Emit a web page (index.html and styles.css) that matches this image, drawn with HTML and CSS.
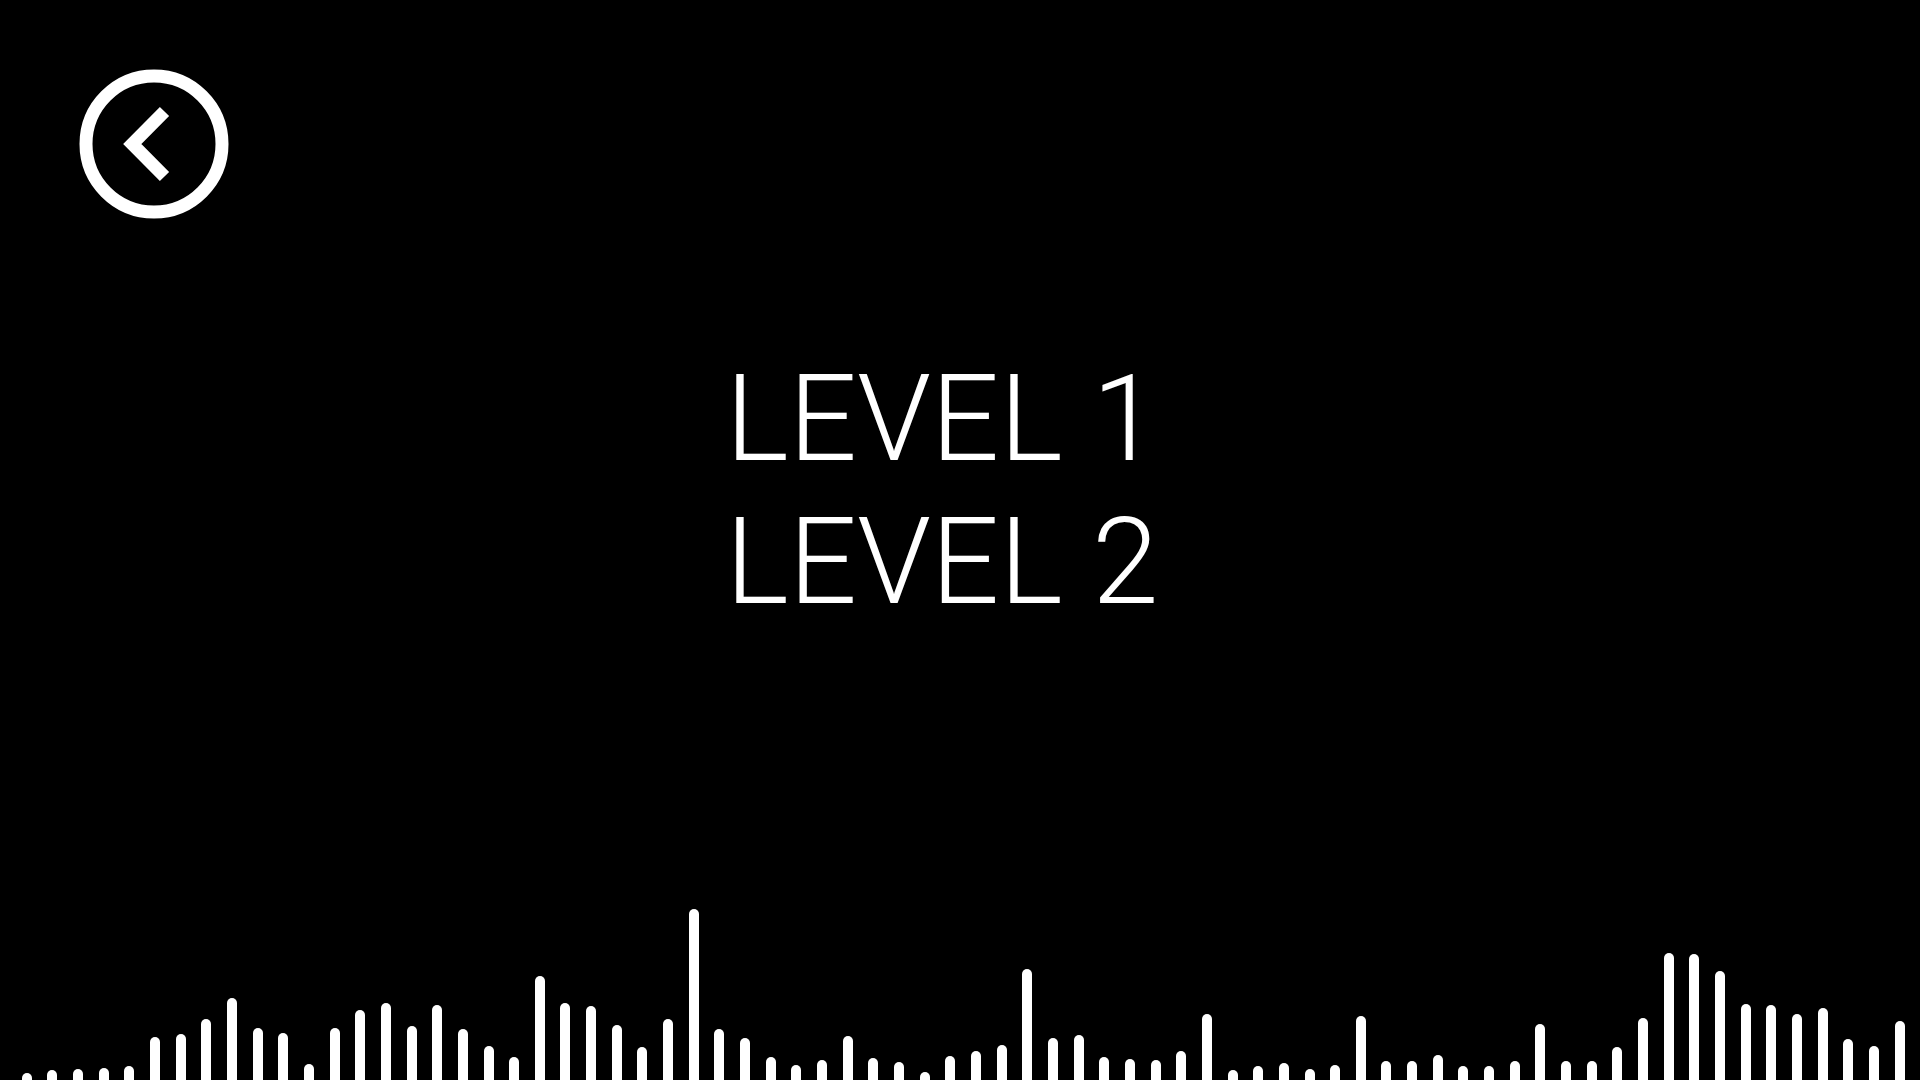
FILE: index.html
```html
<!DOCTYPE html>
<html lang="en">
<head>
<meta charset="utf-8">
<title>Levels</title>
<link rel="stylesheet" href="styles.css">
</head>
<body>
<div class="screen">
  <header class="top">
    <button class="back" aria-label="Back">
      <svg class="back-icon" viewBox="0 0 160 160" width="160" height="160">
        <circle cx="80" cy="80" r="68" fill="none" stroke="#fff" stroke-width="13"/>
        <polyline points="90.5,47.5 58.3,80 90.5,112.5" fill="none" stroke="#fff" stroke-width="13" stroke-linejoin="miter" stroke-linecap="butt"/>
      </svg>
    </button>
  </header>
  <main class="levels">
    <div class="level">LEVEL 1</div>
    <div class="level">LEVEL 2</div>
  </main>
  <footer class="bars">
    <span class="bar" style="height:7px"></span>
    <span class="bar" style="height:10px"></span>
    <span class="bar" style="height:11px"></span>
    <span class="bar" style="height:12px"></span>
    <span class="bar" style="height:14px"></span>
    <span class="bar" style="height:43px"></span>
    <span class="bar" style="height:46px"></span>
    <span class="bar" style="height:61px"></span>
    <span class="bar" style="height:82px"></span>
    <span class="bar" style="height:52px"></span>
    <span class="bar" style="height:47px"></span>
    <span class="bar" style="height:16px"></span>
    <span class="bar" style="height:52px"></span>
    <span class="bar" style="height:70px"></span>
    <span class="bar" style="height:77px"></span>
    <span class="bar" style="height:54px"></span>
    <span class="bar" style="height:75px"></span>
    <span class="bar" style="height:51px"></span>
    <span class="bar" style="height:34px"></span>
    <span class="bar" style="height:23px"></span>
    <span class="bar" style="height:104px"></span>
    <span class="bar" style="height:77px"></span>
    <span class="bar" style="height:74px"></span>
    <span class="bar" style="height:55px"></span>
    <span class="bar" style="height:33px"></span>
    <span class="bar" style="height:61px"></span>
    <span class="bar" style="height:171px"></span>
    <span class="bar" style="height:51px"></span>
    <span class="bar" style="height:42px"></span>
    <span class="bar" style="height:23px"></span>
    <span class="bar" style="height:15px"></span>
    <span class="bar" style="height:20px"></span>
    <span class="bar" style="height:44px"></span>
    <span class="bar" style="height:22px"></span>
    <span class="bar" style="height:18px"></span>
    <span class="bar" style="height:8px"></span>
    <span class="bar" style="height:24px"></span>
    <span class="bar" style="height:29px"></span>
    <span class="bar" style="height:35px"></span>
    <span class="bar" style="height:111px"></span>
    <span class="bar" style="height:42px"></span>
    <span class="bar" style="height:45px"></span>
    <span class="bar" style="height:23px"></span>
    <span class="bar" style="height:21px"></span>
    <span class="bar" style="height:20px"></span>
    <span class="bar" style="height:29px"></span>
    <span class="bar" style="height:66px"></span>
    <span class="bar" style="height:10px"></span>
    <span class="bar" style="height:14px"></span>
    <span class="bar" style="height:17px"></span>
    <span class="bar" style="height:11px"></span>
    <span class="bar" style="height:15px"></span>
    <span class="bar" style="height:64px"></span>
    <span class="bar" style="height:19px"></span>
    <span class="bar" style="height:19px"></span>
    <span class="bar" style="height:25px"></span>
    <span class="bar" style="height:14px"></span>
    <span class="bar" style="height:14px"></span>
    <span class="bar" style="height:19px"></span>
    <span class="bar" style="height:56px"></span>
    <span class="bar" style="height:19px"></span>
    <span class="bar" style="height:19px"></span>
    <span class="bar" style="height:33px"></span>
    <span class="bar" style="height:62px"></span>
    <span class="bar" style="height:127px"></span>
    <span class="bar" style="height:126px"></span>
    <span class="bar" style="height:109px"></span>
    <span class="bar" style="height:76px"></span>
    <span class="bar" style="height:75px"></span>
    <span class="bar" style="height:66px"></span>
    <span class="bar" style="height:72px"></span>
    <span class="bar" style="height:41px"></span>
    <span class="bar" style="height:34px"></span>
    <span class="bar" style="height:59px"></span>
    <span class="bar" style="height:75px"></span>
  </footer>
</div>
</body>
</html>
```

FILE: styles.css
```css
html, body {
  margin: 0;
  padding: 0;
  background: #000;
}

body {
  font-family: Roboto, "Liberation Sans", sans-serif;
  color: #fff;
  overflow: hidden;
}

.screen {
  width: 1920px;
  height: 1080px;
  display: flex;
  flex-direction: column;
  overflow: hidden;
}

.top {
  padding: 64px 0 0 74px;
  height: 160px;
  display: flex;
}

.back {
  background: none;
  border: 0;
  padding: 0;
  margin: 0;
  width: 160px;
  height: 160px;
  cursor: pointer;
}

.back-icon {
  display: block;
}

.levels {
  margin-top: 123.6px;
  padding-right: 36px;
  display: flex;
  flex-direction: column;
  align-items: center;
}

.level {
  font-size: 120px;
  font-weight: 300;
  line-height: 143px;
  color: #fff;
  white-space: nowrap;
}

.bars {
  margin-top: auto;
  height: 190px;
  display: flex;
  align-items: flex-end;
  gap: 15.66px;
  padding-left: 21.7px;
  overflow: hidden;
}

.bar {
  flex: 0 0 10px;
  width: 10px;
  background: #fff;
  border-radius: 5px 5px 0 0;
}
```
